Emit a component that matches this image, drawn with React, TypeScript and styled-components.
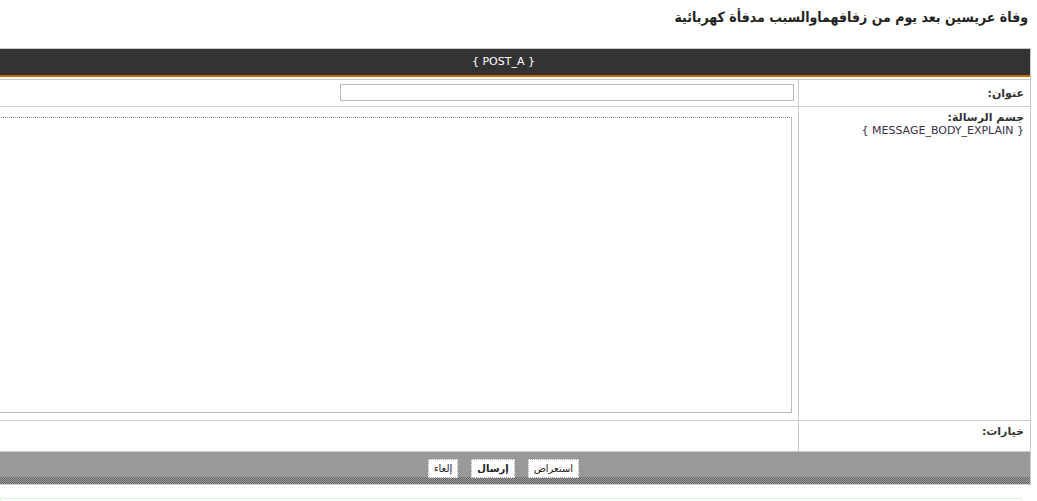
import React from 'react';
import styled, { createGlobalStyle } from 'styled-components';

const GlobalStyle = createGlobalStyle`
  html, body {
    margin: 0;
    padding: 0;
    background: #fff;
    overflow: hidden;
  }
  body {
    font-family: Tahoma, "DejaVu Sans", sans-serif;
    color: #333;
  }
`;

const Page = styled.div`
  direction: rtl;
  padding: 0 6px 0 0;
`;

const Title = styled.h1`
  margin: 0 0 20px;
  padding: 4px 3px 0 0;
  height: 24px;
  font-family: "DejaVu Sans Condensed", "DejaVu Sans", sans-serif;
  font-stretch: condensed;
  font-size: 14px;
  line-height: 26px;
  font-weight: bold;
  color: #222;
  white-space: nowrap;
`;

// wider than the window on purpose: it runs off the left edge
const Panel = styled.div`
  width: 1055px;
  box-sizing: border-box;
  border: 1px solid #ccc;
  background: #fff;
`;

const PanelHeader = styled.div`
  height: 26px;
  line-height: 26px;
  background: #333;
  border-bottom: 2px solid #cc6600;
  margin-bottom: 2px;
  color: #fff;
  font-family: "DejaVu Sans", Verdana, sans-serif;
  font-size: 11px;
  text-align: center;
`;

const Row = styled.div<{ $height: number }>`
  display: grid;
  grid-template-columns: 232px 1fr;
  height: ${p => p.$height}px;
  border-top: 1px solid #ccc;
`;

const LabelCell = styled.div<{ $center?: boolean }>`
  box-sizing: border-box;
  border-left: 1px solid #ccc;
  padding: ${p => (p.$center ? '0 6px' : '4px 6px 0')};
  display: flex;
  flex-direction: column;
  justify-content: ${p => (p.$center ? 'center' : 'flex-start')};
  font-size: 11px;
  line-height: 13px;
`;

const Label = styled.span`
  font-weight: bold;
  color: #333;
`;

const Explain = styled.span`
  font-family: "DejaVu Sans", Verdana, sans-serif;
  font-size: 11px;
  color: #3a3048;
`;

const FieldCell = styled.div<{ $pad: string }>`
  padding: ${p => p.$pad};
  min-width: 0;
`;

const TextInput = styled.input`
  display: block;
  width: 454px;
  height: 17px;
  box-sizing: border-box;
  border: 1px solid #bbb;
  padding: 0 3px;
  font-size: 11px;
  outline: none;
`;

const MessageArea = styled.textarea`
  display: block;
  width: 100%;
  height: 296px;
  box-sizing: border-box;
  border: 1px solid #bbb;
  border-top: 1px dotted #888;
  resize: none;
  outline: none;
  font-size: 12px;
`;

const Footer = styled.div`
  height: 33px;
  box-sizing: border-box;
  border-top: 1px solid #ccc;
  padding-top: 7px;
  display: flex;
  justify-content: center;
  align-items: flex-start;
  gap: 13px;
  background:
    linear-gradient(#999, #999) top / 100% 25px no-repeat,
    repeating-conic-gradient(#666 0 25%, #9a9a9a 0 50%) 0 0 / 2px 2px;
`;

const Button = styled.button<{ $primary?: boolean }>`
  height: 19px;
  padding: 0 5px;
  background: #fff;
  border: 1px dotted #aaa;
  font-family: Tahoma, "DejaVu Sans", sans-serif;
  font-size: 10px;
  font-weight: ${p => (p.$primary ? 'bold' : 'normal')};
  color: #222;
  cursor: pointer;
`;

const NextBox = styled.div`
  margin: 13px 9px 0 0;
  height: 10px;
  border: 1px solid #d4f7d4;
`;

export default function App() {
  return (
    <>
      <GlobalStyle />
      <Page>
        <Title>وفاة عريسين بعد يوم من زفافهماوالسبب مدفأة كهربائية</Title>
        <Panel>
          <PanelHeader>{'{ POST_A }'}</PanelHeader>

          <Row $height={26}>
            <LabelCell $center>
              <Label>عنوان:</Label>
            </LabelCell>
            <FieldCell $pad="4px 4px 0 0">
              <TextInput type="text" />
            </FieldCell>
          </Row>

          <Row $height={313}>
            <LabelCell>
              <Label>جسم الرسالة:</Label>
              <Explain>{'{ MESSAGE_BODY_EXPLAIN }'}</Explain>
            </LabelCell>
            <FieldCell $pad="10px 6px 0">
              <MessageArea />
            </FieldCell>
          </Row>

          <Row $height={30}>
            <LabelCell>
              <Label>خيارات:</Label>
            </LabelCell>
            <FieldCell $pad="0" />
          </Row>

          <Footer>
            <Button>استعراض</Button>
            <Button $primary>إرسال</Button>
            <Button>إلغاء</Button>
          </Footer>
        </Panel>
        <NextBox />
      </Page>
    </>
  );
}
